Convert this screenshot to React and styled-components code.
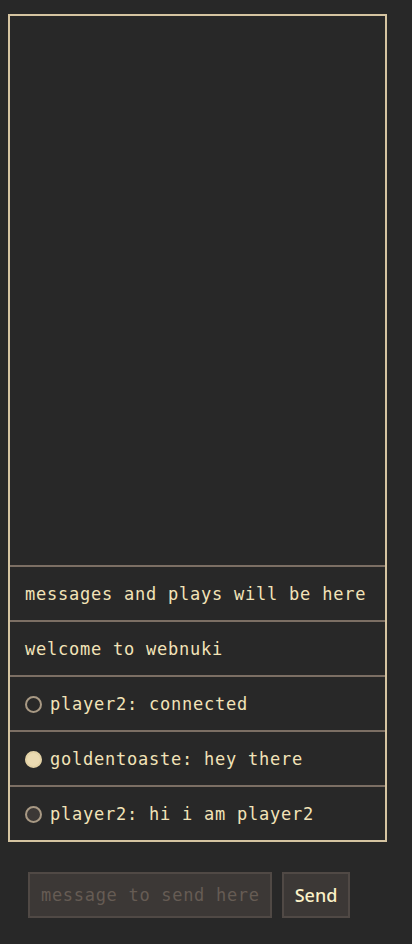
import React from "react";
import styled, { createGlobalStyle } from "styled-components";

const Global = createGlobalStyle`
  html, body { margin: 0; padding: 0; background: #282828; }
  body { font-family: "DejaVu Sans Mono", monospace; }
  * { box-sizing: border-box; }
`;

const Page = styled.div`
  width: 412px;
  min-height: 944px;
  background: #282828;
  padding: 14px 25px 0 8px;
`;

const Log = styled.div`
  height: 828px;
  border: 2px solid #d5c4a1;
  display: flex;
  flex-direction: column;
  justify-content: flex-end;
`;

const Row = styled.div`
  height: 55px;
  border-top: 2px solid #7c6f64;
  display: flex;
  align-items: center;
  gap: 8px;
  padding: 0 0 0 15px;
  color: #f2e3b8;
  font-family: "DejaVu Sans Mono", monospace;
  font-size: 17px;
  letter-spacing: 0.77px;
  white-space: pre;
`;

const fills = {
  empty: "transparent",
  me: "#ebdbb2",
  dark: "#3c3836",
};
const rims = {
  empty: "#a89984",
  me: "#e3d2a6",
  dark: "#a89984",
};

const Dot = styled.span`
  flex: none;
  width: 17px;
  height: 17px;
  border-radius: 50%;
  border: 2px solid ${(p) => rims[p.$kind]};
  background: ${(p) => fills[p.$kind]};
  margin-top: 1px;
`;

const Composer = styled.form`
  display: flex;
  gap: 10px;
  padding: 30px 0 0 20px;
`;

const Input = styled.input`
  width: 244px;
  height: 46px;
  background: #3c3836;
  border: 2px solid #504945;
  outline: none;
  color: #ebdbb2;
  caret-color: #fabd2f;
  padding: 0 0 0 11px;
  font-family: "DejaVu Sans Mono", monospace;
  font-size: 17px;
  letter-spacing: 0.7px;
  &::placeholder { color: #665c54; }
`;

const Button = styled.button`
  width: 68px;
  height: 46px;
  background: #3c3836;
  border: 2px solid #504945;
  color: #fbf1c7;
  font-family: "Noto Sans", sans-serif;
  font-size: 18px;
  font-weight: 500;
  padding: 0;
  cursor: pointer;
`;

const messages = [
  { text: "messages and plays will be here" },
  { text: "welcome to webnuki" },
  { text: "player2: connected", dot: "empty" },
  { text: "goldentoaste: hey there", dot: "me" },
  { text: "player2: hi i am player2", dot: "dark" },
];

export default function App() {
  return (
    <Page>
      <Global />
      <Log>
        {messages.map((m, i) => (
          <Row key={i}>
            {m.dot && <Dot $kind={m.dot} />}
            <span>{m.text}</span>
          </Row>
        ))}
      </Log>
      <Composer onSubmit={(e) => e.preventDefault()}>
        <Input autoFocus placeholder="message to send here" />
        <Button type="submit">Send</Button>
      </Composer>
    </Page>
  );
}
